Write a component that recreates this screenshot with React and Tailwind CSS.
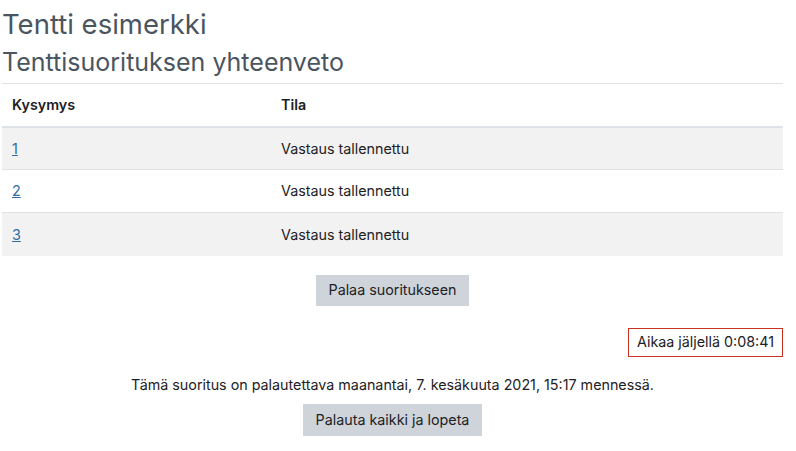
import React from 'react'

const rows = [
  { id: 1, tila: 'Vastaus tallennettu' },
  { id: 2, tila: 'Vastaus tallennettu' },
  { id: 3, tila: 'Vastaus tallennettu' },
]

export default function App() {
  return (
    <div className='bg-white min-h-[451px] pl-[2px] pr-[13px] text-[14.3px] text-[#1d2125]' style={{ fontFamily: 'Inter, "Noto Sans", sans-serif' }}>
      <h2 className='text-[27.5px] leading-[36px] pt-[6px] text-[#4a5560]'>Tentti esimerkki</h2>
      <h3 className='text-[25px] leading-[32px] mt-[4px] text-[#4a5560]'>Tenttisuorituksen yhteenveto</h3>
      <table className='w-full mt-[5px] border-t border-[#dee2e6]'>
        <thead>
          <tr className='h-[43px] border-b-2 border-[#dee2e6]'>
            <th className='text-left font-semibold pl-[10px] w-[279px]'>Kysymys</th>
            <th className='text-left font-semibold'>Tila</th>
          </tr>
        </thead>
        <tbody>
          {rows.map((row, i) => (
            <tr key={row.id} className={'h-[43px] border-t border-[#dee2e6] ' + (i % 2 == 0 ? 'bg-[#f2f2f2]' : 'bg-white')}>
              <td className='pl-[10px]'>
                <a href='#' className='underline text-[#2f6aa5]'>{row.id}</a>
              </td>
              <td>{row.tila}</td>
            </tr>
          ))}
        </tbody>
      </table>
      <div className='flex justify-center mt-[19px]'>
        <button className='bg-[#ced4da] px-[13px] h-[31px]'>Palaa suoritukseen</button>
      </div>
      <div className='flex justify-end mt-[22px]'>
        <div className='border border-[#ca3120] px-[8px] h-[29px] flex items-center'>Aikaa jäljellä 0:08:41</div>
      </div>
      <p className='text-center mt-[17px] leading-[22px]'>Tämä suoritus on palautettava maanantai, 7. kesäkuuta 2021, 15:17 mennessä.</p>
      <div className='flex justify-center mt-[8px]'>
        <button className='bg-[#ced4da] px-[13px] h-[32px]'>Palauta kaikki ja lopeta</button>
      </div>
    </div>
  )
}
